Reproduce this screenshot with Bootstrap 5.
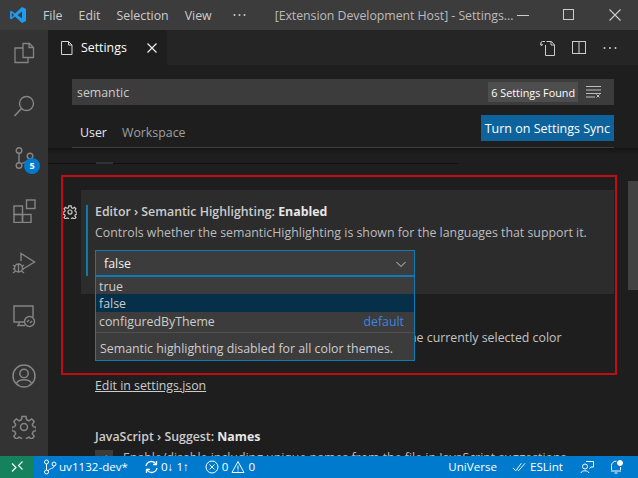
<!DOCTYPE html>
<html lang="en">
<head>
<meta charset="utf-8">
<title>Settings</title>
<link rel="stylesheet" href="https://cdn.jsdelivr.net/npm/bootstrap@5.3.0/dist/css/bootstrap.min.css">
<style>
html,body{height:100%;overflow:hidden}
body{background:#1e1e1e;font-family:"Open Sans","Liberation Sans",sans-serif;font-size:12.35px;line-height:18px;color:#ccc}
.vs-shell{width:638px;height:478px}
.vs-title{height:30px;background:#3c3c3c;color:#ccc;flex:none}
.vs-logo{width:35px}
.vs-menu{padding:1px 8px 0;color:#ccc}
.vs-dots{margin-left:13px}
.vs-wintitle{margin-left:29px;width:224px;color:#bbb;letter-spacing:-.05px;padding-top:1px}
.vs-winbtn{width:46px;height:30px}
.vs-activity{width:48px;background:#333;flex:none}
.vs-act{height:52.5px;position:relative;flex:none}
.vs-act-first{margin-top:-3px}
.vs-act-low{height:51px}
.vs-act-last{margin-bottom:3.5px}
.vs-act-gap{flex:1}
.vs-badge{position:absolute;left:24px;top:26px;width:16px;height:16px;border-radius:50%;background:#007acc;color:#fff;font-size:9px;font-weight:700;line-height:16px;text-align:center}
.vs-main{min-width:0;position:relative;overflow:hidden}
.vs-tabs{height:35px;background:#252526;flex:none}
.vs-tab{width:119px;height:35px;background:#1e1e1e;color:#fff;padding-left:12px}
.vs-tab-label{margin-left:7px;width:65px;padding-top:1px}
.vs-tabact{padding-right:20px;gap:15px}
.vs-head{padding:14px 24px 0;height:83px;flex:none}
.vs-search{height:26px;background:#3c3c3c;padding:0 5px;color:#ccc}
.vs-search-text{padding-top:1px}
.vs-count{background:#4d4d4d;color:#fff;font-size:10.8px;line-height:16px;padding:1px 3px 0;height:20px;display:flex;align-items:center;white-space:nowrap}
.vs-clear{margin:0 8px 0 8px}
.vs-scope{height:43px;border-bottom:1px solid #3f3f3f;position:relative}
.vs-scope .nav-link{padding:0;color:#a0a0a0;font-size:12.35px;line-height:18px;margin-top:19px;height:24px;border-radius:0}
.vs-scope .nav-link.active{color:#e7e7e7;border-bottom:1px solid #e7e7e7;width:42px;padding-left:8px;margin-bottom:-1px;height:25px}
.vs-scope .vs-ws{margin-left:8px}
.btn.vs-sync{background:#0e639c;color:#fff;border:0;border-radius:0;font-size:12.5px;line-height:18px;height:26px;padding:1px 4px 0;position:absolute;right:0;top:10px;white-space:nowrap}
.vs-body{position:relative;flex:1;overflow:hidden;background:#1e1e1e;padding-left:47px}
.vs-prevline{position:absolute;left:0;top:15px;width:410px;height:1px;background:#101010}
.vs-prevbox{position:absolute;left:48px;top:14px;width:17px;height:2px;background:#2f3236}
.vs-shade{position:absolute;left:0;right:0;top:0;height:6px;background:linear-gradient(#141414,#1e1e1e)}
.vs-focusrow{position:absolute;left:33px;top:42px;width:533px;height:104px;background:#2c2c2d}
.vs-rowbar{position:absolute;left:38px;top:57px;width:2px;height:71px;background:#0e7aa6}
.vs-gear{position:absolute;left:15px;top:57px}
.vs-set{position:relative}
.vs-set-title{font-weight:600;color:#ccc;line-height:18px;white-space:nowrap}
.vs-set-title b{font-weight:700;color:#e7e7e7}
.vs-set-desc{color:#bdbdbd;white-space:nowrap;line-height:18px;margin-top:3px}
.vs-first{padding-top:55px}
.vs-select{width:320px;height:27px;margin-top:8px;background:#3c3c3c;border:1px solid #0e7ab8;border-bottom-width:2px;color:#f0f0f0;padding:1px 6px 0 8px}
.vs-desc2{position:absolute;left:68px;top:181px;white-space:nowrap;color:#c4c4c4}
.vs-edit{position:absolute;left:47px;top:229px;color:#ccc;text-decoration:underline;white-space:nowrap}
.vs-js{position:absolute;left:47px;top:280px}
.vs-check{position:absolute;left:47px;top:302px;width:18px;height:18px;background:#3c3c3c;color:#ccc;font-size:12px;text-align:center}
.vs-check-text{position:absolute;left:75px;top:301px;white-space:nowrap;color:#bbb}
.vs-drop{position:absolute;left:47px;top:129px;width:320px;background:#3c3c3c;border:1px solid #0e7ab8;border-top-width:0;z-index:3}
.vs-drop .list-group-item{background:transparent;border:0;border-radius:0;padding:1px 3px 0;color:#ccc;height:18px;line-height:18px;font-size:12.35px}
.vs-drop .list-group-item.active{background:#062f4a;color:#ccc}
.vs-def{color:#3794ff;opacity:.85;padding-right:7px}
.vs-dropinfo{border-top:1px solid #505050;margin-top:2px;padding:7px 4px 0;height:28px;color:#ccc;white-space:nowrap}
.vs-note{position:absolute;left:13px;top:145px;width:556px;height:200px;border:2px solid #c00d13;z-index:4;pointer-events:none}
.vs-scrollbar{position:absolute;right:0;top:33px;width:10px;height:109px;background:#424242}
.vs-status{height:22px;background:#007acc;color:#fff;font-size:11.6px;flex:none}
.vs-remote{width:34px;height:22px;background:#16825d}
.vs-sitem{white-space:nowrap}
.vs-feedback{margin-left:2px}
svg{display:block;flex:none}
</style>
</head>
<body>
<div class="vs-shell d-flex flex-column">
  <header class="vs-title d-flex align-items-center">
    <div class="vs-logo d-flex justify-content-center">
      <svg width="18" height="18" viewBox="0 0 18 18"><path d="M13 1l4 2v12l-4 2-7-6.500L2.300 13.300 1 12.500V5.500l1.300-.8L6 7.500z" fill="#1f9cf0"/><path d="M13 5.500L8.500 9 13 12.500z" fill="#3c3c3c"/><path d="M2.800 6.800L5 9l-2.200 2.200z" fill="#3c3c3c"/></svg>
    </div>
    <span class="vs-menu">File</span><span class="vs-menu">Edit</span><span class="vs-menu">Selection</span><span class="vs-menu">View</span>
    <svg class="vs-dots" width="13" height="4" viewBox="0 0 13 4" fill="#ccc"><circle cx="1.500" cy="2" r="1"/><circle cx="6.500" cy="2" r="1"/><circle cx="11.500" cy="2" r="1"/></svg>
    <span class="vs-wintitle text-nowrap">[Extension Development Host] - Settings...</span>
    <div class="ms-auto d-flex">
      <div class="vs-winbtn d-flex align-items-center justify-content-center"><svg width="12" height="12"><path d="M0 6.500h12" stroke="#ccc"/></svg></div>
      <div class="vs-winbtn d-flex align-items-center justify-content-center"><svg width="12" height="12"><rect x=".5" y=".5" width="10" height="10" fill="none" stroke="#ccc"/></svg></div>
      <div class="vs-winbtn d-flex align-items-center justify-content-center"><svg width="12" height="12"><path d="M.5.500l11 11M11.500.500l-11 11" stroke="#ccc" stroke-width="1.100"/></svg></div>
    </div>
  </header>
  <div class="d-flex flex-grow-1" style="min-height:0">
    <aside class="vs-activity d-flex flex-column">
      <div class="vs-act vs-act-first d-flex align-items-center justify-content-center"><svg width="24" height="24" viewBox="0 0 24 24" fill="none" stroke="#858585" stroke-width="1.300"><path d="M11 2.500h6.500l4 4V16.500H11zM17 2.500v4h4.500"/><path d="M11 7H3v14.500h13V16.500"/></svg></div>
      <div class="vs-act d-flex align-items-center justify-content-center"><svg width="24" height="24" viewBox="0 0 24 24" fill="none" stroke="#858585" stroke-width="1.400"><circle cx="14.500" cy="9.500" r="7"/><path d="M9.500 14.500L2.500 22" stroke-width="1.700"/></svg></div>
      <div class="vs-act d-flex align-items-center justify-content-center"><svg width="24" height="24" viewBox="0 0 24 24" fill="none" stroke="#858585" stroke-width="1.400"><circle cx="7" cy="4.500" r="2.800"/><circle cx="7" cy="19.500" r="2.800"/><circle cx="18" cy="10" r="2.800"/><path d="M7 7.300v9.400M18 12.800c0 3-6 3-8.500 5"/></svg><span class="vs-badge">5</span></div>
      <div class="vs-act d-flex align-items-center justify-content-center"><svg width="24" height="24" viewBox="0 0 24 24" fill="none" stroke="#858585" stroke-width="1.400"><rect x="2" y="7" width="8.500" height="8.500"/><rect x="2" y="15.500" width="8.500" height="8"/><rect x="10.500" y="15.500" width="8.500" height="8"/><rect x="14.500" y="1" width="8.500" height="8.500"/></svg></div>
      <div class="vs-act d-flex align-items-center justify-content-center"><svg width="24" height="24" viewBox="0 0 24 24" fill="none" stroke="#858585" stroke-width="1.400"><path d="M9 10V2.500L22.500 11 11 18"/><circle cx="6.500" cy="17" r="4"/><path d="M6.500 13v8M1 14l2.500 1.500M1 22l2.500-2M12 14l-2.500 1.500M12 22l-2.500-2M1 18h1.500M10.500 18H12"/></svg></div>
      <div class="vs-act d-flex align-items-center justify-content-center"><svg width="24" height="24" viewBox="0 0 24 24" fill="none" stroke="#858585" stroke-width="1.400"><path d="M12 18H2V2h19v11"/><path d="M5 21.500h8M7 18v3.500"/><circle cx="17.500" cy="17.500" r="5"/><path d="M15 18l2-2M18 19l2-2"/></svg></div>
      <div class="vs-act-gap"></div>
      <div class="vs-act vs-act-low d-flex align-items-center justify-content-center"><svg width="24" height="24" viewBox="0 0 24 24" fill="none" stroke="#858585" stroke-width="1.500"><circle cx="12" cy="12" r="11"/><circle cx="12" cy="9.500" r="4.200"/><path d="M4.500 19.500c2-5 13-5 15 0"/></svg></div>
      <div class="vs-act vs-act-low vs-act-last d-flex align-items-center justify-content-center"><svg width="24" height="24" viewBox="0 0 24 24" fill="none" stroke="#858585" stroke-width="1.500"><circle cx="12" cy="12" r="3.500"/><path d="M10 1.500h4l.6 3.300 2.300 1 2.800-1.900 2.500 2.700-1.900 2.800 1 2.300 3 .6v3.400l-3 .6-1 2.300 1.900 2.800-2.500 2.700-2.800-1.900-2.300 1-.6 1.700h-4l-.6-1.700-2.300-1-2.800 1.900-2.500-2.700 1.900-2.800-1-2.300-3-.6v-3.400l3-.6 1-2.300-1.900-2.800 2.500-2.700 2.800 1.900 2.300-1z"/></svg></div>
    </aside>
    <main class="vs-main flex-grow-1 d-flex flex-column">
      <div class="vs-tabs d-flex align-items-center">
        <div class="vs-tab d-flex align-items-center">
          <svg width="14" height="16" viewBox="0 0 14 16" fill="none" stroke="#d4d4d4"><path d="M1.500 1.500h7l3.500 3.500v9.500H1.500zM8.500 1.500V5H12"/></svg>
          <span class="vs-tab-label">Settings</span>
          <svg width="12" height="12"><path d="M1.500 1.500l9 9M10.500 1.500l-9 9" stroke="#eee" stroke-width="1.200"/></svg>
        </div>
        <div class="ms-auto d-flex align-items-center vs-tabact">
          <svg width="16" height="16" viewBox="0 0 16 16" fill="none" stroke="#ccc"><path d="M5.500 5v10.500h9V5l-3-3.500H6.500M11 1.500V5h3.500"/><path d="M5 1.500H2.500a1.500 1.500 0 0 0-1.500 1.500V5M.5 3.500L1 5.500l2-1"/></svg>
          <svg width="16" height="16" viewBox="0 0 16 16" fill="none" stroke="#ccc"><rect x="1.500" y="1.500" width="13" height="12"/><path d="M8 1.500v12"/></svg>
          <svg width="16" height="16" viewBox="0 0 16 16" fill="#ccc"><circle cx="2.500" cy="8" r="1"/><circle cx="8" cy="8" r="1"/><circle cx="13.500" cy="8" r="1"/></svg>
        </div>
      </div>
      <div class="vs-head">
        <div class="vs-search d-flex align-items-center">
          <span class="vs-search-text">semantic</span>
          <span class="vs-count ms-auto">6 Settings Found</span>
          <svg class="vs-clear" width="15" height="12" viewBox="0 0 15 12" fill="none" stroke="#ccc" stroke-width=".9"><path d="M0 .5h15M0 4h15M0 7.500h15M0 11h9M10.500 8.500l3 3M13.500 8.500l-3 3"/></svg>
        </div>
        <div class="vs-scope">
          <ul class="nav">
            <li class="nav-item"><a class="nav-link active" href="#">User</a></li>
            <li class="nav-item"><a class="nav-link vs-ws" href="#">Workspace</a></li>
          </ul>
          <button class="btn vs-sync" type="button">Turn on Settings Sync</button>
        </div>
      </div>
      <div class="vs-body">
        <div class="vs-shade"></div>
        <div class="vs-prevline"></div>
        <div class="vs-prevbox"></div>
        <div class="vs-focusrow"></div>
        <div class="vs-rowbar"></div>
        <svg class="vs-gear" width="14" height="14" viewBox="0 0 24 24" fill="none" stroke="#ccc" stroke-width="2"><circle cx="12" cy="12" r="3.500"/><path d="M10 1.500h4l.6 3.300 2.300 1 2.800-1.900 2.500 2.700-1.900 2.800 1 2.300 3 .6v3.400l-3 .6-1 2.300 1.900 2.800-2.500 2.700-2.800-1.900-2.300 1-.6 1.700h-4l-.6-1.700-2.300-1-2.800 1.900-2.500-2.700 1.900-2.800-1-2.300-3-.6v-3.400l3-.6 1-2.300-1.900-2.800 2.500-2.700 2.800 1.900 2.300-1z"/></svg>
        <section class="vs-set vs-first">
          <div class="vs-set-title">Editor › Semantic Highlighting: <b>Enabled</b></div>
          <div class="vs-set-desc">Controls whether the semanticHighlighting is shown for the languages that support it.</div>
          <div class="vs-select d-flex align-items-center justify-content-between">
            <span>false</span>
            <svg width="14" height="14" viewBox="0 0 14 14" fill="none" stroke="#ccc"><path d="M2.500 5l4.500 4.500L11.500 5"/></svg>
          </div>
        </section>
        <div class="vs-drop">
          <div class="list-group">
            <div class="list-group-item">true</div>
            <div class="list-group-item active">false</div>
            <div class="list-group-item d-flex justify-content-between"><span>configuredByTheme</span><span class="vs-def">default</span></div>
          </div>
          <div class="vs-dropinfo">Semantic highlighting disabled for all color themes.</div>
        </div>
        <div class="vs-desc2">Overrides editor syntax colors and font style from the currently selected color</div>
        <a class="vs-edit" href="#">Edit in settings.json</a>
        <div class="vs-set-title vs-js">JavaScript › Suggest: <b>Names</b></div>
        <div class="vs-check">✓</div>
        <div class="vs-check-text">Enable/disable including unique names from the file in JavaScript suggestions.</div>
        <div class="vs-scrollbar"></div>
      </div>
      <div class="vs-note"></div>
    </main>
  </div>
  <footer class="vs-status d-flex align-items-center">
    <div class="vs-remote d-flex align-items-center justify-content-center"><svg width="14" height="14" viewBox="0 0 14 14" fill="none" stroke="#fff" stroke-width="1.100"><path d="M2 3.500l4 4-4 4M12.500 1.500l-4 4 4 4"/></svg></div>
    <div class="vs-sitem d-flex align-items-center" style="margin-left:9px;gap:2px"><svg width="14" height="16" viewBox="0 0 14 16" fill="none" stroke="#fff"><circle cx="3.500" cy="3" r="2"/><circle cx="3.500" cy="13" r="2"/><circle cx="11" cy="5" r="2"/><path d="M3.500 5v6M11 7c0 3-5 2-6 5"/></svg><span>uv1132-dev*</span></div>
    <div class="vs-sitem d-flex align-items-center" style="margin-left:16px;gap:2px"><svg width="15" height="14" viewBox="0 0 15 14" fill="none" stroke="#fff" stroke-width="1.300"><path d="M2 6a5.500 5.500 0 0 1 10-2M13 8a5.500 5.500 0 0 1-10 2"/><path d="M12.500 1v3.500H9M2.500 13V9.500H6"/></svg><span>0↓ 1↑</span></div>
    <div class="vs-sitem d-flex align-items-center" style="margin-left:16px;gap:3px"><svg width="14" height="14" viewBox="0 0 14 14" fill="none" stroke="#fff"><circle cx="7" cy="7" r="6"/><path d="M4.500 4.500l5 5M9.500 4.500l-5 5"/></svg><span>0</span><svg width="14" height="14" viewBox="0 0 14 14" fill="none" stroke="#fff"><path d="M7 1.500l6 11H1zM7 5.500v4M7 10.500v1"/></svg><span>0</span></div>
    <div class="ms-auto vs-sitem d-flex align-items-center" style="gap:15px;padding-right:15px">
      <span>UniVerse</span>
      <span class="d-flex align-items-center" style="gap:4px"><svg width="14" height="12" viewBox="0 0 15 12" fill="none" stroke="#fff"><path d="M1 7l3 3 6-8M6 9l1 1 7-8"/></svg>ESLint</span>
      <svg class="vs-feedback" width="14" height="14" viewBox="0 0 14 14" fill="none" stroke="#fff"><circle cx="5" cy="6.500" r="2.500"/><path d="M1 13c.5-3 7-3 8 0M6 1.500h7.500V7H11L9.500 8.500"/></svg>
      <svg width="14" height="16" viewBox="0 0 14 16" fill="none" stroke="#fff"><path d="M2.500 11V6.500a4.500 4.500 0 0 1 5-4.300M2 12h10M5.500 14h3M11.500 8v3"/><circle cx="11" cy="4" r="2.500" fill="#fff"/></svg>
    </div>
  </footer>
</div>
<script src="https://cdn.jsdelivr.net/npm/bootstrap@5.3.0/dist/js/bootstrap.bundle.min.js"></script>
</body>
</html>
